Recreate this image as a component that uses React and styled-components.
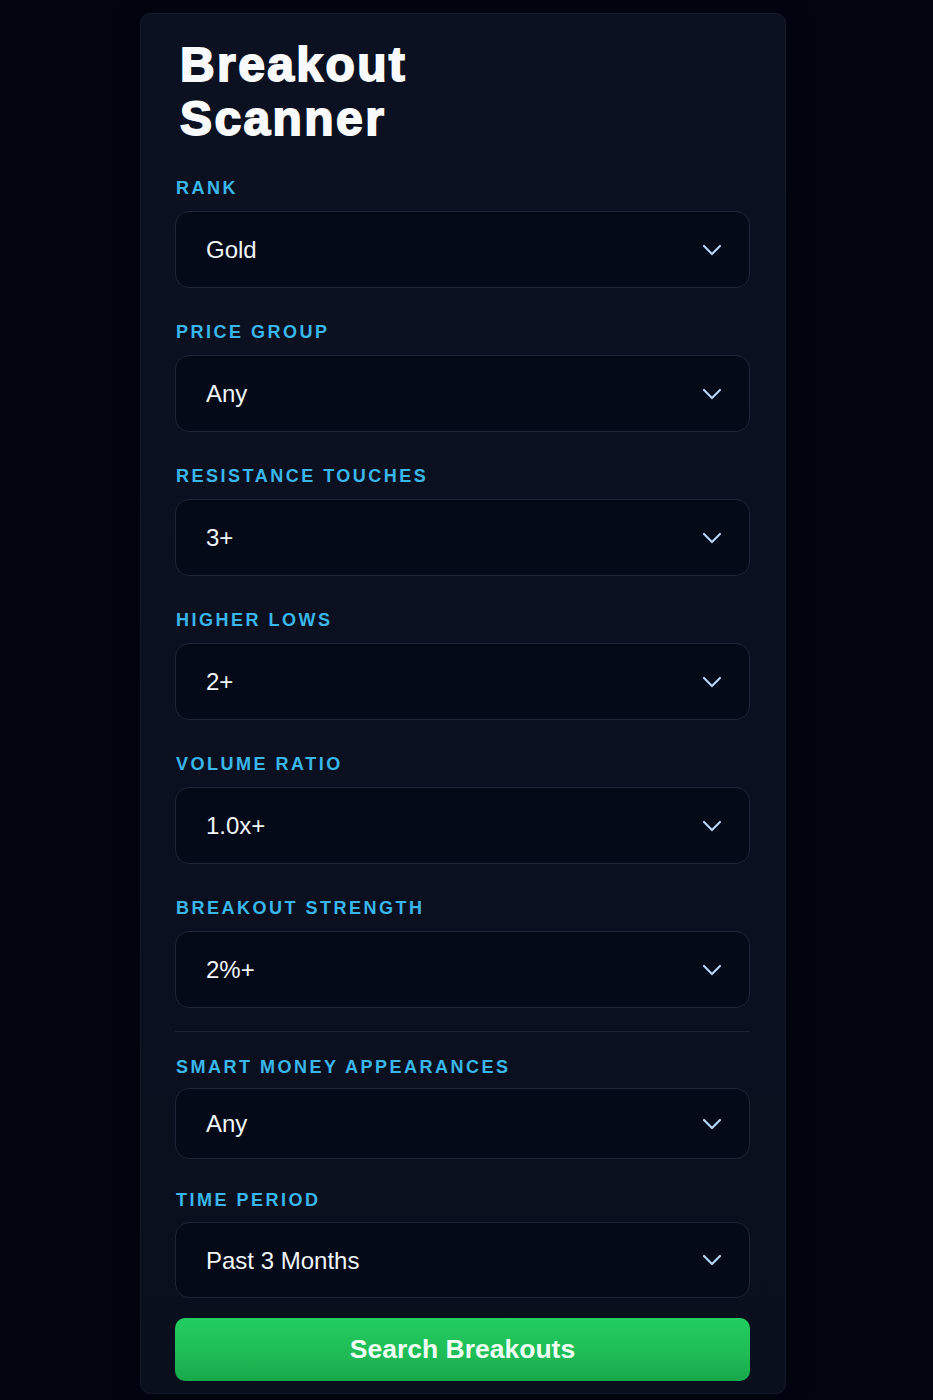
import styled, { createGlobalStyle } from "styled-components";

const GlobalStyle = createGlobalStyle`
  html, body {
    margin: 0;
    padding: 0;
    background: #020510;
  }
  body {
    font-family: "Liberation Sans", Arial, sans-serif;
    color: #f1f5f9;
  }
  * {
    box-sizing: border-box;
  }
`;

const Page = styled.div`
  min-height: 1400px;
  padding: 13px 147px 6px 140px;
  background: #020510;
`;

const Card = styled.div`
  background: linear-gradient(180deg, #0b1120 0%, #0a1020 60%, #0a0f1d 100%);
  border: 1px solid #121a2b;
  border-radius: 10px;
  padding: 24px 35px 12px 34px;
  box-shadow: 0 0 24px rgba(0, 0, 0, 0.35);
`;

const Title = styled.h1`
  margin: 0 0 31px 5px;
  font-family: "Liberation Sans", Arial, sans-serif;
  font-size: 48px;
  line-height: 54px;
  font-weight: 700;
  letter-spacing: 2.4px;
  color: #f8fafc;
  -webkit-text-stroke: 1.8px #f8fafc;
`;

const Field = styled.div`
  display: flex;
  flex-direction: column;
  gap: ${(p) => p.$gap ?? 12}px;
  margin-bottom: ${(p) => p.$after ?? 33}px;
`;

const Label = styled.label`
  font-size: 18px;
  line-height: 22px;
  font-weight: 700;
  letter-spacing: 2.5px;
  color: #3ab7ea;
  text-transform: uppercase;
  padding-left: 1px;
`;

const SelectWrap = styled.div`
  position: relative;
`;

const Select = styled.select`
  appearance: none;
  -webkit-appearance: none;
  width: 100%;
  height: ${(p) => p.$height ?? 77}px;
  padding: 0 60px 0 30px;
  background: #050a18;
  border: 1px solid #1c2638;
  border-radius: 14px;
  color: #f1f5f9;
  font-family: "Liberation Sans", Arial, sans-serif;
  font-size: 24px;
  outline: none;
  cursor: pointer;
`;

const Chevron = styled.svg`
  position: absolute;
  right: 28px;
  top: 50%;
  transform: translateY(-50%);
  pointer-events: none;
`;

const Divider = styled.hr`
  border: none;
  height: 1px;
  background: #1a2233;
  margin: 0 0 24px 0;
`;

const SearchButton = styled.button`
  width: 100%;
  height: 63px;
  border: none;
  border-radius: 10px;
  background: linear-gradient(180deg, #22cd60 0%, #1fbd57 55%, #18a84b 100%);
  color: #f0fdf4;
  font-family: "Liberation Sans", Arial, sans-serif;
  font-size: 26.5px;
  font-weight: 700;
  cursor: pointer;
`;

const fields = [
  { label: "Rank", options: ["Gold", "Silver", "Bronze", "Any"] },
  { label: "Price Group", options: ["Any", "Under $10", "$10 - $50", "$50+"] },
  { label: "Resistance Touches", options: ["3+", "2+", "4+", "5+"] },
  { label: "Higher Lows", options: ["2+", "1+", "3+", "4+"] },
  { label: "Volume Ratio", options: ["1.0x+", "1.5x+", "2.0x+", "3.0x+"] },
  { label: "Breakout Strength", options: ["2%+", "1%+", "3%+", "5%+"], after: 23 },
];

const ChevronDown = () => (
  <Chevron width="20" height="12" viewBox="0 0 20 12" fill="none">
    <polyline
      points="2,2 10,10 18,2"
      stroke="#b4d4f5"
      strokeWidth="2.2"
      strokeLinecap="round"
      strokeLinejoin="round"
    />
  </Chevron>
);

const SelectField = ({ label, options, after, gap, height }) => (
  <Field $after={after} $gap={gap}>
    <Label>{label}</Label>
    <SelectWrap>
      <Select $height={height} defaultValue={options[0]}>
        {options.map((o) => (
          <option key={o}>{o}</option>
        ))}
      </Select>
      <ChevronDown />
    </SelectWrap>
  </Field>
);

export default function App() {
  return (
    <>
      <GlobalStyle />
      <Page>
        <Card>
          <Title>
            Breakout
            <br />
            Scanner
          </Title>
          {fields.map((f) => (
            <SelectField key={f.label} {...f} />
          ))}
          <Divider />
          <SelectField
            label="Smart Money Appearances"
            options={["Any", "1+", "2+", "3+"]}
            gap={10}
            height={71}
            after={30}
          />
          <SelectField
            label="Time Period"
            options={["Past 3 Months", "Past Month", "Past 6 Months", "Past Year"]}
            gap={11}
            height={76}
            after={20}
          />
          <SearchButton>Search Breakouts</SearchButton>
        </Card>
      </Page>
    </>
  );
}
